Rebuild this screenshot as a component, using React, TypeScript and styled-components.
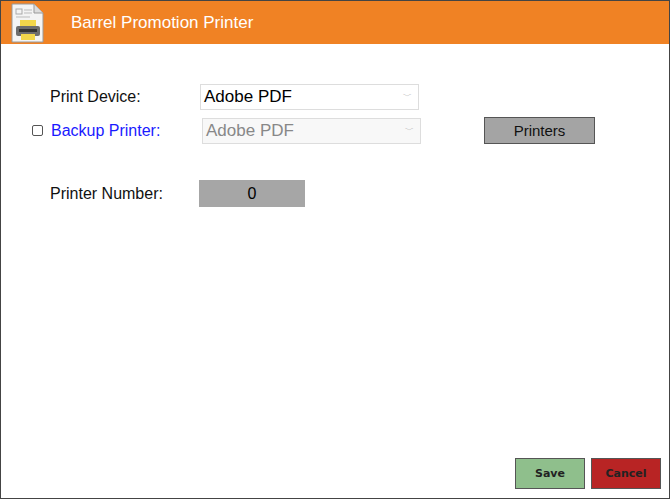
import React from "react";
import styled, {createGlobalStyle} from "styled-components";

const Global = createGlobalStyle`
    html, body { margin: 0; padding: 0; background: #fff; }
    body { font-family: "Liberation Sans", Arial, sans-serif; }
`;

const Window = styled.div`
    width: 670px;
    height: 499px;
    box-sizing: border-box;
    border: 1px solid #444;
    display: flex;
    flex-direction: column;
    background: #fff;
`;

const Header = styled.div`
    height: 43px;
    background: #f08224;
    display: flex;
    align-items: center;
    padding-left: 8px;
    gap: 26px;
    color: #fff;
    font-size: 17px;
`;

const Body = styled.div`
    flex: 1;
    display: flex;
    flex-direction: column;
    padding: 39px 0 0 29px;
`;

const Row = styled.div<{ $mt?: number }>`
    display: flex;
    align-items: center;
    height: 27px;
    margin-top: ${(p) => p.$mt ?? 0}px;
`;

const Check = styled.span`
    width: 9px;
    height: 9px;
    border: 1px solid #555;
    border-radius: 2px;
    margin: 0 8px 0 2px;
`;

const Label = styled.span<{ $link?: boolean; $indent?: boolean }>`
    width: ${(p) => (p.$indent ? 150 : 150)}px;
    padding-left: ${(p) => (p.$indent ? 20 : 0)}px;
    font-size: 16px;
    color: ${(p) => (p.$link ? "#1a1aff" : "#111")};
`;

const Select = styled.div<{ $disabled?: boolean }>`
    width: 219px;
    height: 26px;
    box-sizing: border-box;
    border: 1px solid #ddd;
    background: ${(p) => (p.$disabled ? "#f8f8f8" : "#fff")};
    color: ${(p) => (p.$disabled ? "#888" : "#000")};
    display: flex;
    align-items: center;
    justify-content: space-between;
    padding: 0 6px 0 3px;
    font-size: 17px;
`;

const Chevron = styled.span`
    font-size: 9px;
    color: #999;
`;

const GreyButton = styled.div`
    margin-left: 63px;
    width: 111px;
    height: 27px;
    box-sizing: border-box;
    border: 1px solid #555;
    background: #a4a4a4;
    display: flex;
    align-items: center;
    justify-content: center;
    font-size: 15px;
    color: #111;
`;

const NumberBox = styled.div`
    width: 106px;
    height: 27px;
    background: #a6a6a6;
    display: flex;
    align-items: center;
    justify-content: center;
    font-size: 16px;
`;

const Footer = styled.div`
    display: flex;
    justify-content: flex-end;
    gap: 6px;
    padding: 0 8px 9px 0;
`;

const ActionButton = styled.div<{ $bg: string }>`
    width: 70px;
    height: 31px;
    box-sizing: border-box;
    border: 1px solid #555;
    background: ${(p) => p.$bg};
    display: flex;
    align-items: center;
    justify-content: center;
    font-family: "DejaVu Sans", sans-serif;
    font-weight: bold;
    font-size: 11px;
    color: #222;
`;

const Icon = () => (
    <svg width="36" height="40" viewBox="0 0 36 40">
        <path d="M3 1h22l9 9v29H3z" fill="#f4f4f4" stroke="#999"/>
        <path d="M25 1v9h9" fill="#ddd" stroke="#999"/>
        <rect x="7" y="6" width="6" height="5" fill="none" stroke="#aaa"/>
        <path d="M15 7h8M15 10h8M7 14h14" stroke="#bbb"/>
        <rect x="11" y="17" width="16" height="8" fill="#f2d64b"/>
        <rect x="7" y="23" width="24" height="10" rx="2" fill="#6d6d6d"/>
        <rect x="10" y="26" width="18" height="3" fill="#333"/>
        <rect x="12" y="31" width="14" height="6" fill="#f2d64b"/>
    </svg>
);

export default function App() {
    return (
        <Window>
            <Global/>
            <Header>
                <Icon/>
                <span>Barrel Promotion Printer</span>
            </Header>
            <Body>
                <Row>
                    <Label $indent>Print Device:</Label>
                    <Select>Adobe PDF<Chevron>﹀</Chevron></Select>
                </Row>
                <Row $mt={7}>
                    <Check/>
                    <Label $link style={{width: 151}}>Backup Printer:</Label>
                    <Select $disabled>Adobe PDF<Chevron>﹀</Chevron></Select>
                    <GreyButton>Printers</GreyButton>
                </Row>
                <Row $mt={36}>
                    <Label $indent style={{width: 149}}>Printer Number:</Label>
                    <NumberBox>0</NumberBox>
                </Row>
                <div style={{flex: 1}}/>
                <Footer>
                    <ActionButton $bg="#8fbf8c">Save</ActionButton>
                    <ActionButton $bg="#b82424">Cancel</ActionButton>
                </Footer>
            </Body>
        </Window>
    );
}
